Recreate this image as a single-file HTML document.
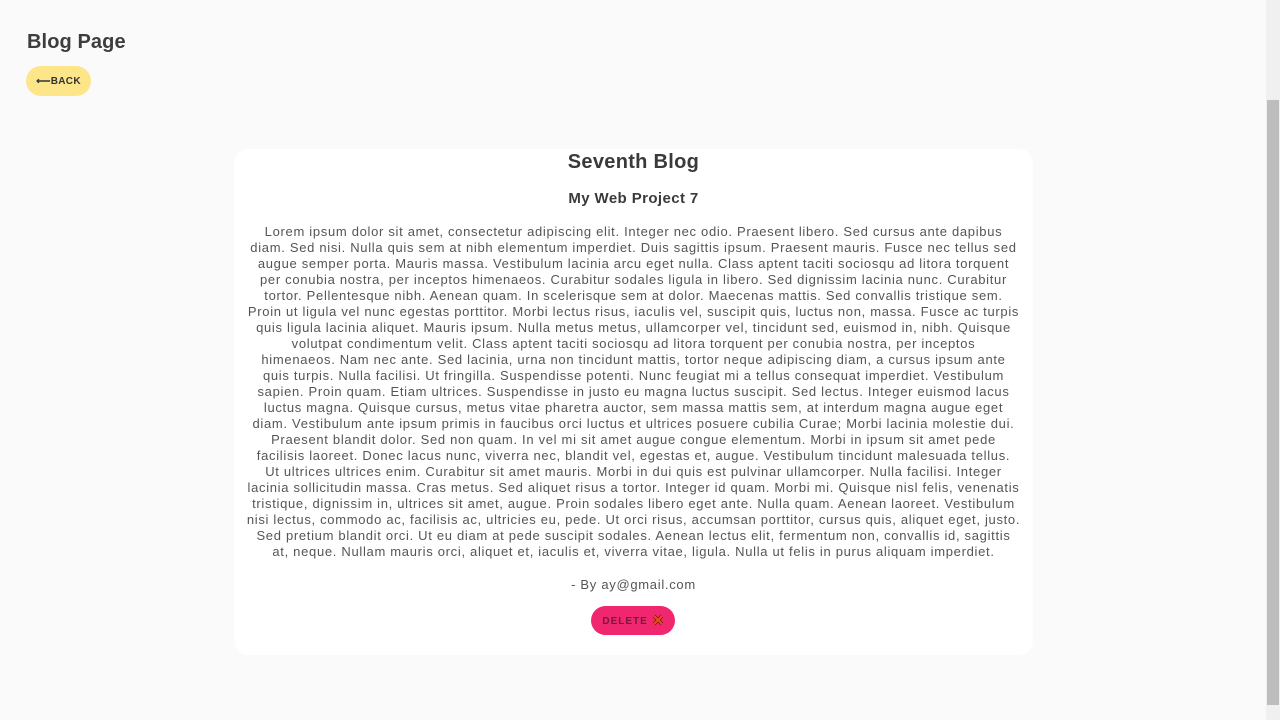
<!DOCTYPE html>
<html><head><style>
html,body{margin:0;padding:0;overflow:hidden}
body{width:1280px;height:720px;background:#fafafa;font-family:"Liberation Sans",sans-serif;color:#444;position:relative}
h1{position:absolute;left:27px;top:31px;margin:0;font-size:20px;font-weight:bold;color:#3d3d3d;letter-spacing:0.1px}
.back{position:absolute;left:26px;top:66px;width:65px;height:30px;border-radius:15px;background:#fde68a;font-size:10px;font-weight:bold;color:#333;text-align:center;line-height:32px;letter-spacing:0.3px}
.card{position:absolute;left:234px;top:149px;width:799px;height:506px;background:#fff;border-radius:14px;text-align:center}
.t{position:absolute;left:0;right:0;top:2px;font-size:20px;font-weight:bold;color:#3a3a3a;letter-spacing:0.3px}
.s{position:absolute;left:0;right:0;top:41px;font-size:15px;font-weight:bold;color:#3a3a3a;letter-spacing:0.4px}
.p{position:absolute;left:0;right:0;top:75px;font-size:13px;line-height:16px;color:#555;letter-spacing:0.69px}
.p div{white-space:nowrap}
.by{position:absolute;left:0;right:0;top:428px;font-size:13px;color:#555;letter-spacing:0.7px}
.del{position:absolute;left:357px;top:457px;width:84px;height:29px;border-radius:15px;background:#f0266f;color:#7a1838;font-size:10px;font-weight:bold;line-height:31px;letter-spacing:1px}
.sb{position:absolute;left:1266px;top:0;width:14px;height:720px;background:#f0f0f0}
.th{position:absolute;left:1267px;top:100px;width:12px;height:605px;background:#bdbdbd}
</style></head><body>
<h1>Blog Page</h1>
<div class="back">⟵BACK</div>
<div class="card">
<div class="t">Seventh Blog</div>
<div class="s">My Web Project 7</div>
<div class="p">
<div>Lorem ipsum dolor sit amet, consectetur adipiscing elit. Integer nec odio. Praesent libero. Sed cursus ante dapibus</div>
<div>diam. Sed nisi. Nulla quis sem at nibh elementum imperdiet. Duis sagittis ipsum. Praesent mauris. Fusce nec tellus sed</div>
<div>augue semper porta. Mauris massa. Vestibulum lacinia arcu eget nulla. Class aptent taciti sociosqu ad litora torquent</div>
<div>per conubia nostra, per inceptos himenaeos. Curabitur sodales ligula in libero. Sed dignissim lacinia nunc. Curabitur</div>
<div>tortor. Pellentesque nibh. Aenean quam. In scelerisque sem at dolor. Maecenas mattis. Sed convallis tristique sem.</div>
<div>Proin ut ligula vel nunc egestas porttitor. Morbi lectus risus, iaculis vel, suscipit quis, luctus non, massa. Fusce ac turpis</div>
<div>quis ligula lacinia aliquet. Mauris ipsum. Nulla metus metus, ullamcorper vel, tincidunt sed, euismod in, nibh. Quisque</div>
<div>volutpat condimentum velit. Class aptent taciti sociosqu ad litora torquent per conubia nostra, per inceptos</div>
<div>himenaeos. Nam nec ante. Sed lacinia, urna non tincidunt mattis, tortor neque adipiscing diam, a cursus ipsum ante</div>
<div>quis turpis. Nulla facilisi. Ut fringilla. Suspendisse potenti. Nunc feugiat mi a tellus consequat imperdiet. Vestibulum</div>
<div>sapien. Proin quam. Etiam ultrices. Suspendisse in justo eu magna luctus suscipit. Sed lectus. Integer euismod lacus</div>
<div>luctus magna. Quisque cursus, metus vitae pharetra auctor, sem massa mattis sem, at interdum magna augue eget</div>
<div>diam. Vestibulum ante ipsum primis in faucibus orci luctus et ultrices posuere cubilia Curae; Morbi lacinia molestie dui.</div>
<div>Praesent blandit dolor. Sed non quam. In vel mi sit amet augue congue elementum. Morbi in ipsum sit amet pede</div>
<div>facilisis laoreet. Donec lacus nunc, viverra nec, blandit vel, egestas et, augue. Vestibulum tincidunt malesuada tellus.</div>
<div>Ut ultrices ultrices enim. Curabitur sit amet mauris. Morbi in dui quis est pulvinar ullamcorper. Nulla facilisi. Integer</div>
<div>lacinia sollicitudin massa. Cras metus. Sed aliquet risus a tortor. Integer id quam. Morbi mi. Quisque nisl felis, venenatis</div>
<div>tristique, dignissim in, ultrices sit amet, augue. Proin sodales libero eget ante. Nulla quam. Aenean laoreet. Vestibulum</div>
<div>nisi lectus, commodo ac, facilisis ac, ultricies eu, pede. Ut orci risus, accumsan porttitor, cursus quis, aliquet eget, justo.</div>
<div>Sed pretium blandit orci. Ut eu diam at pede suscipit sodales. Aenean lectus elit, fermentum non, convallis id, sagittis</div>
<div>at, neque. Nullam mauris orci, aliquet et, iaculis et, viverra vitae, ligula. Nulla ut felis in purus aliquam imperdiet.</div>
</div>
<div class="by">- By ay@gmail.com</div>
<div class="del">DELETE <svg width="12" height="12" viewBox="0 0 12 12" style="vertical-align:-2px"><path d="M2 2L10 10M10 2L2 10" stroke="#7a1010" stroke-width="3.4"/><path d="M2 2L10 10M10 2L2 10" stroke="#e8501c" stroke-width="2"/></svg></div>
</div>
<div class="sb"></div><div class="th"></div>
</body></html>
